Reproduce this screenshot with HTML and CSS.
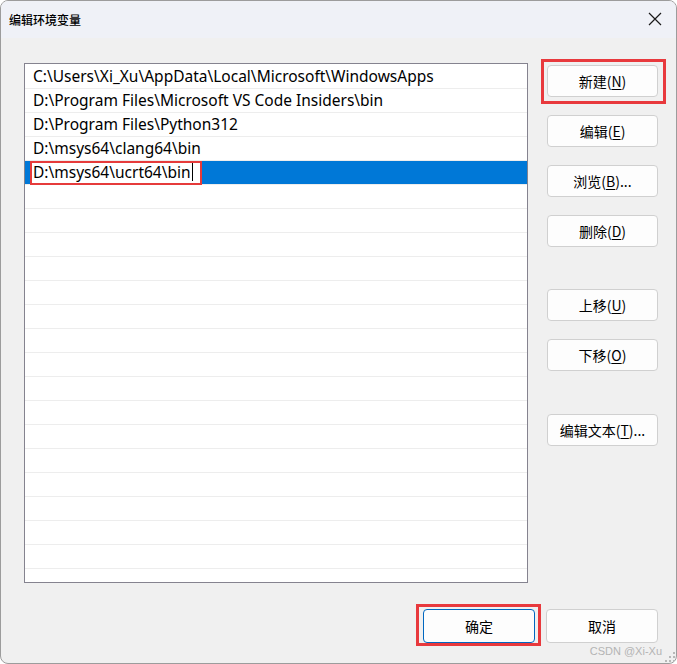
FILE: index.html
```html
<!DOCTYPE html>
<html lang="zh-CN">
<head>
<meta charset="utf-8">
<title>编辑环境变量</title>
<link rel="stylesheet" href="styles.css">
</head>
<body>
<div class="window">
  <div class="titlebar">
    <span class="title">编辑环境变量</span>
    <svg class="close" width="14" height="14" viewBox="0 0 14 14"><path d="M1 1 L13 13 M13 1 L1 13" stroke="#1a1a1a" stroke-width="1.2" fill="none"/></svg>
  </div>
  <div class="content">
    <div class="main">
      <div class="list">
        <div class="row">C:\Users\Xi_Xu\AppData\Local\Microsoft\WindowsApps</div>
        <div class="row">D:\Program Files\Microsoft VS Code Insiders\bin</div>
        <div class="row">D:\Program Files\Python312</div>
        <div class="row">D:\msys64\clang64\bin</div>
        <div class="row selected"><span class="edit">D:\msys64\ucrt64\bin<span class="caret"></span></span></div>
        <div class="row"></div><div class="row"></div><div class="row"></div><div class="row"></div>
        <div class="row"></div><div class="row"></div><div class="row"></div><div class="row"></div>
        <div class="row"></div><div class="row"></div><div class="row"></div><div class="row"></div>
        <div class="row"></div><div class="row"></div><div class="row"></div><div class="row"></div>
        <div class="row"></div>
      </div>
      <div class="side">
        <button class="btn marked">新建(<u>N</u>)</button>
        <button class="btn">编辑(<u>E</u>)</button>
        <button class="btn">浏览(<u>B</u>)...</button>
        <button class="btn">删除(<u>D</u>)</button>
        <button class="btn gap-lg">上移(<u>U</u>)</button>
        <button class="btn">下移(<u>O</u>)</button>
        <button class="btn gap-xl">编辑文本(<u>T</u>)...</button>
      </div>
    </div>
    <div class="footer">
      <button class="btn wide primary marked">确定</button>
      <button class="btn wide">取消</button>
    </div>
  </div>
  <span class="watermark">CSDN @Xi-Xu</span>
  <svg class="grip" width="12" height="12" viewBox="0 0 12 12">
    <rect x="9" y="1" width="2" height="2" fill="#b8b8b8"/>
    <rect x="5" y="5" width="2" height="2" fill="#b8b8b8"/>
    <rect x="9" y="5" width="2" height="2" fill="#b8b8b8"/>
    <rect x="1" y="9" width="2" height="2" fill="#b8b8b8"/>
    <rect x="5" y="9" width="2" height="2" fill="#b8b8b8"/>
    <rect x="9" y="9" width="2" height="2" fill="#b8b8b8"/>
  </svg>
</div>
</body>
</html>
```

FILE: styles.css
```css
* { box-sizing: border-box; }
html, body { margin: 0; padding: 0; background: #ffffff; }
body { font-family: "Noto Sans", "Noto Sans CJK SC", sans-serif; }

.window {
  position: relative;
  width: 677px;
  height: 664px;
  border: 1px solid #9c9c9c;
  border-radius: 8px;
  overflow: hidden;
  background: #f0f0f0;
  display: flex;
  flex-direction: column;
}

.titlebar {
  height: 37px;
  background: #eff1f7;
  display: flex;
  align-items: center;
  justify-content: space-between;
  padding: 0 14px 0 8px;
}
.title {
  font-family: "Noto Sans CJK SC", sans-serif;
  font-size: 12px;
  font-weight: 500;
  color: #000;
  margin-top: -1px;
}
.close { display: block; margin-top: -1px; }

.content {
  flex: 1;
  padding: 25px 18px 0 23px;
}
.main {
  display: flex;
  gap: 19px;
}
.list {
  width: 504px;
  height: 520px;
  border: 1px solid #85838f;
  background: #fff;
  overflow: hidden;
  padding-top: 1px;
}
.row {
  height: 24px;
  border-bottom: 1px solid #ededed;
  padding-left: 8px;
  font-size: 15.5px;
  line-height: 23px;
  color: #000;
  white-space: nowrap;
}
.row.selected {
  background: #0078d7;
  padding-left: 5px;
}
.edit {
  display: inline-block;
  height: 23px;
  background: #fff;
  padding: 0 8px 0 3px;
  border-right: 1px solid #8a8a8a;
  position: relative;
}
.edit::after {
  content: "";
  position: absolute;
  left: 0;
  top: 0;
  right: -1px;
  bottom: -1px;
  border: 2px solid #e63b3b;
}
.caret {
  display: inline-block;
  width: 1px;
  height: 18px;
  background: #000;
  vertical-align: -3px;
  margin-left: 1px;
}

.side {
  width: 111px;
  padding-top: 2px;
  display: flex;
  flex-direction: column;
  gap: 18px;
}
.btn {
  position: relative;
  height: 32px;
  width: 111px;
  background: #fdfdfd;
  border: 1px solid #d0d0d0;
  border-radius: 4px;
  font-family: "Noto Sans CJK SC", sans-serif;
  font-size: 14px;
  color: #000;
  padding: 0;
  line-height: 1;
}
.btn u { text-underline-offset: 2px; }
.gap-lg { margin-top: 24px; }
.gap-xl { margin-top: 25px; }
.marked::after {
  content: "";
  position: absolute;
  left: -7px;
  top: -7px;
  right: -9px;
  bottom: -8px;
  border: 3px solid #e8393d;
}

.footer {
  margin-top: 26px;
  display: flex;
  justify-content: flex-end;
  gap: 11px;
}
.wide { width: 112px; height: 34px; }
.primary { border-color: #0067c0; }
.wide.marked::after { left: -8px; top: -6px; right: -7px; bottom: -4px; }

.watermark {
  position: absolute;
  right: 14px;
  bottom: 6px;
  font-family: "Liberation Sans", sans-serif;
  font-size: 11px;
  color: #b4b4b4;
}
.grip {
  position: absolute;
  right: 0;
  bottom: 0;
}
```
